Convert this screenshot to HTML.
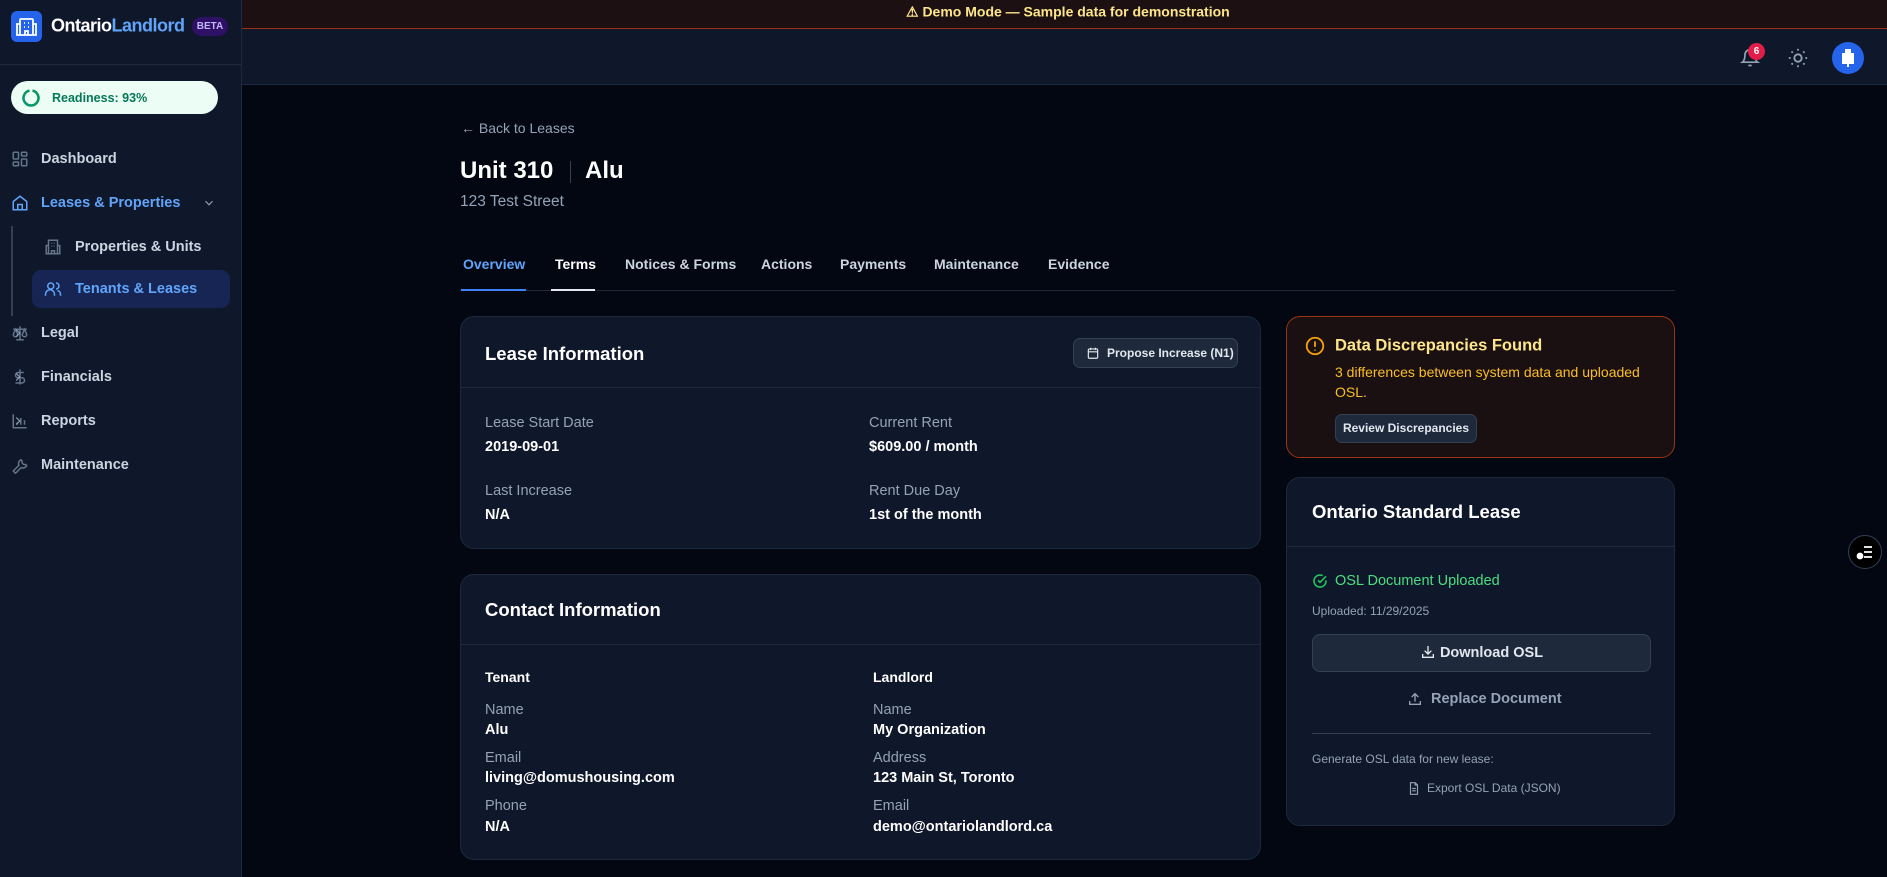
<!DOCTYPE html>
<html><head><meta charset="utf-8"><style>
*{box-sizing:border-box;margin:0;padding:0}
body{width:1887px;height:877px;overflow:hidden;background:#030712;font-family:"Liberation Sans",sans-serif;color:#e5e7eb;position:relative}
.a{position:absolute;white-space:nowrap}
.c{transform:translateY(-50%)}
.side{position:absolute;left:0;top:0;width:242px;height:877px;background:#0f172a;border-right:1px solid #1e293b}
.nav{position:absolute;left:0;width:242px;height:36px;display:flex;align-items:center;font-size:14.5px;color:#cbd5e1;font-weight:bold}
.nav svg{position:absolute;left:11px}
.nav span{position:absolute;left:41px}
.chev{position:absolute;left:204px}
.card{position:absolute;background:#0f172a;border:1px solid #1e293b;border-radius:14px}
.lbl{font-size:14.5px;color:#94a3b8}
.val{font-size:14.5px;color:#fff;font-weight:bold}
.ttl{font-size:18.5px;color:#fff;font-weight:bold}
.tab{font-size:14px;color:#cbd5e1;font-weight:bold}
</style></head><body>
<div class="side">
  <div class="a" style="left:11px;top:11px;width:31px;height:31px;background:#2563eb;border-radius:6px">
    <svg width="31" height="31" viewBox="0 0 31 31" fill="none" stroke="#fff" stroke-width="1.8"><rect x="9" y="8" width="13" height="16" rx="1"/><path d="M9 13H6v11h3M22 13h3v11h-3M13 12h1M17 12h1M13 16h1M17 16h1M14 24v-4h3v4"/></svg>
  </div>
  <div class="a c" style="left:51px;top:26px;font-size:18px;font-weight:bold;color:#fff;letter-spacing:-0.5px">Ontario<span style="color:#60a5fa">Landlord</span></div>
  <div class="a" style="left:192px;top:17px;width:36px;height:19px;border-radius:10px;background:#2e1065;color:#c4b5fd;font-size:10px;font-weight:bold;text-align:center;line-height:19px">BETA</div>
  <div class="a" style="left:0;top:64px;width:242px;height:1px;background:#1e293b"></div>
  <div class="a" style="left:11px;top:81px;width:207px;height:33px;border-radius:17px;background:#ecfdf5">
    <svg class="a" style="left:10px;top:7px" width="20" height="20" viewBox="0 0 20 20"><path d="M11.5 2.6A7.5 7.5 0 1 1 8.5 2.6" fill="none" stroke="#059669" stroke-width="2.5"/></svg>
    <div class="a c" style="left:41px;top:16.5px;font-size:12.5px;font-weight:bold;color:#047857">Readiness: 93%</div>
  </div>
  <div class="nav" style="top:141px"><svg width="18" height="18" viewBox="0 0 24 24" fill="none" stroke="#64748b" stroke-width="2"><rect x="3" y="3" width="7" height="9" rx="1"/><rect x="14" y="3" width="7" height="5" rx="1"/><rect x="14" y="12" width="7" height="9" rx="1"/><rect x="3" y="16" width="7" height="5" rx="1"/></svg><span>Dashboard</span></div>
  <div class="nav" style="top:185px;color:#60a5fa"><svg width="18" height="18" viewBox="0 0 24 24" fill="none" stroke="#60a5fa" stroke-width="2"><path d="M3 10l9-7 9 7v11H3zM9 21v-7h6v7"/></svg><span>Leases &amp; Properties</span><svg class="chev" style="left:202px" width="14" height="14" viewBox="0 0 24 24" fill="none" stroke="#94a3b8" stroke-width="2"><path d="M6 9l6 6 6-6"/></svg></div>
  <div class="a" style="left:11px;top:226px;width:2px;height:90px;background:#334155"></div>
  <div class="nav" style="top:229px"><svg style="left:44px" width="18" height="18" viewBox="0 0 24 24" fill="none" stroke="#64748b" stroke-width="2"><rect x="6" y="3" width="12" height="18"/><path d="M6 10H3v11h3M18 10h3v11h-3M10 7h1M13 7h1M10 11h1M13 11h1M10 21v-4h4v4"/></svg><span style="left:75px">Properties &amp; Units</span></div>
  <div class="a" style="left:32px;top:270px;width:198px;height:38px;border-radius:9px;background:#172554"></div>
  <div class="nav" style="top:271px;color:#60a5fa"><svg style="left:44px" width="18" height="18" viewBox="0 0 24 24" fill="none" stroke="#60a5fa" stroke-width="2"><circle cx="9" cy="8" r="4"/><path d="M2 21v-2a6 6 0 0112 0v2M16 4a4 4 0 010 8M22 21v-2a5 5 0 00-4-5"/></svg><span style="left:75px">Tenants &amp; Leases</span></div>
  <div class="nav" style="top:315px"><svg width="18" height="18" viewBox="0 0 24 24" fill="none" stroke="#64748b" stroke-width="2"><path d="M12 3v18M7 21h10M3 7h18M6 7l-3 7a3 3 0 006 0zM18 7l-3 7a3 3 0 006 0z"/></svg><span>Legal</span><svg class="chev" width="14" height="14" viewBox="0 0 24 24" fill="none" stroke="#94a3b8" stroke-width="2"><path d="M9 6l6 6-6 6"/></svg></div>
  <div class="nav" style="top:359px"><svg width="18" height="18" viewBox="0 0 24 24" fill="none" stroke="#64748b" stroke-width="2"><path d="M12 2v20M17 6H9.5a3.5 3.5 0 000 7h5a3.5 3.5 0 010 7H6"/></svg><span>Financials</span><svg class="chev" width="14" height="14" viewBox="0 0 24 24" fill="none" stroke="#94a3b8" stroke-width="2"><path d="M9 6l6 6-6 6"/></svg></div>
  <div class="nav" style="top:403px"><svg width="18" height="18" viewBox="0 0 24 24" fill="none" stroke="#64748b" stroke-width="2"><path d="M3 3v18h18M8 17v-3M13 17V8M18 17v-6"/></svg><span>Reports</span><svg class="chev" width="14" height="14" viewBox="0 0 24 24" fill="none" stroke="#94a3b8" stroke-width="2"><path d="M9 6l6 6-6 6"/></svg></div>
  <div class="nav" style="top:447px"><svg width="18" height="18" viewBox="0 0 24 24" fill="none" stroke="#64748b" stroke-width="2"><path d="M14.7 6.3a4 4 0 005 5L21 13a6 6 0 01-7.5 2.5L6 23l-3-3 7.5-7.5A6 6 0 0113 5z"/></svg><span>Maintenance</span></div>
</div>

<div class="a" style="left:242px;top:0;width:1645px;height:29px;background:#1c1013;border-bottom:1px solid #9a3412"></div>
<div class="a c" style="left:906px;top:12px;font-size:14px;font-weight:bold;color:#fde68a">⚠ Demo Mode — Sample data for demonstration</div>
<div class="a" style="left:242px;top:29px;width:1645px;height:56px;background:#0f172a;border-bottom:1px solid #1e293b"></div>
<svg class="a" style="left:1740px;top:47px" width="20" height="22" viewBox="0 0 24 24" fill="none" stroke="#94a3b8" stroke-width="2"><path d="M6 8a6 6 0 0112 0c0 7 3 9 3 9H3s3-2 3-9M10 21h4"/></svg>
<div class="a" style="left:1748px;top:43px;width:17px;height:17px;border-radius:50%;background:#e11d48;color:#fff;font-size:10px;font-weight:bold;text-align:center;line-height:17px">6</div>
<svg class="a" style="left:1787px;top:47px" width="22" height="22" viewBox="0 0 24 24" fill="none" stroke="#94a3b8" stroke-width="2"><circle cx="12" cy="12" r="4"/><path d="M12 2v2M12 20v2M4.9 4.9l1.4 1.4M17.7 17.7l1.4 1.4M2 12h2M20 12h2M4.9 19.1l1.4-1.4M17.7 6.3l1.4-1.4"/></svg>
<div class="a" style="left:1832px;top:42px;width:32px;height:32px;border-radius:50%;background:#2563eb"><svg width="32" height="32" viewBox="0 0 32 32" fill="#fff"><rect x="13" y="7" width="6" height="5"/><rect x="10" y="11" width="12" height="11"/><rect x="15" y="22" width="2" height="3"/></svg></div>

<div class="a c" style="left:461px;top:128px;font-size:14px;color:#94a3b8">← Back to Leases</div>
<div class="a c" style="left:460px;top:171px;font-size:24px;font-weight:bold;color:#fff">Unit 310</div>
<div class="a" style="left:570px;top:161px;width:1px;height:22px;background:#334155"></div>
<div class="a c" style="left:585px;top:171px;font-size:24px;font-weight:bold;color:#fff">Alu</div>
<div class="a c" style="left:460px;top:202px;font-size:15.5px;color:#94a3b8">123 Test Street</div>

<div class="a" style="left:460px;top:290px;width:1215px;height:1px;background:#1e293b"></div>
<div class="a c tab" style="left:463px;top:264px;color:#60a5fa">Overview</div>
<div class="a" style="left:461px;top:289px;width:65px;height:2px;background:#3b82f6"></div>
<div class="a c tab" style="left:555px;top:264px;color:#fff">Terms</div>
<div class="a" style="left:551px;top:289px;width:44px;height:2px;background:#e2e8f0"></div>
<div class="a c tab" style="left:625px;top:264px">Notices &amp; Forms</div>
<div class="a c tab" style="left:761px;top:264px">Actions</div>
<div class="a c tab" style="left:840px;top:264px">Payments</div>
<div class="a c tab" style="left:934px;top:264px">Maintenance</div>
<div class="a c tab" style="left:1048px;top:264px">Evidence</div>

<div class="card" style="left:460px;top:316px;width:801px;height:233px">
  <div class="a c ttl" style="left:24px;top:37px">Lease Information</div>
  <div class="a" style="left:612px;top:21px;width:165px;height:30px;border:1px solid #334155;background:#1e293b;border-radius:7px;font-size:12px;font-weight:bold;color:#e2e8f0;line-height:28px;padding-left:33px">Propose Increase (N1)</div>
  <svg class="a" style="left:625px;top:29px" width="14" height="14" viewBox="0 0 24 24" fill="none" stroke="#e2e8f0" stroke-width="2"><rect x="4" y="5" width="16" height="16" rx="2"/><path d="M4 10h16M8 3v4M16 3v4"/></svg>
  <div class="a" style="left:0;top:70px;width:799px;height:1px;background:#1e293b"></div>
  <div class="a c lbl" style="left:24px;top:106px">Lease Start Date</div>
  <div class="a c val" style="left:24px;top:130px">2019-09-01</div>
  <div class="a c lbl" style="left:408px;top:106px">Current Rent</div>
  <div class="a c val" style="left:408px;top:130px">$609.00 / month</div>
  <div class="a c lbl" style="left:24px;top:174px">Last Increase</div>
  <div class="a c val" style="left:24px;top:198px">N/A</div>
  <div class="a c lbl" style="left:408px;top:174px">Rent Due Day</div>
  <div class="a c val" style="left:408px;top:198px">1st of the month</div>
</div>

<div class="card" style="left:460px;top:574px;width:801px;height:286px">
  <div class="a c ttl" style="left:24px;top:35px">Contact Information</div>
  <div class="a" style="left:0;top:69px;width:799px;height:1px;background:#1e293b"></div>
  <div class="a c val" style="left:24px;top:102px;font-size:14px">Tenant</div>
  <div class="a c lbl" style="left:24px;top:135px">Name</div>
  <div class="a c val" style="left:24px;top:155px">Alu</div>
  <div class="a c lbl" style="left:24px;top:183px">Email</div>
  <div class="a c val" style="left:24px;top:203px">living@domushousing.com</div>
  <div class="a c lbl" style="left:24px;top:231px">Phone</div>
  <div class="a c val" style="left:24px;top:252px">N/A</div>
  <div class="a c val" style="left:412px;top:102px;font-size:14px">Landlord</div>
  <div class="a c lbl" style="left:412px;top:135px">Name</div>
  <div class="a c val" style="left:412px;top:155px">My Organization</div>
  <div class="a c lbl" style="left:412px;top:183px">Address</div>
  <div class="a c val" style="left:412px;top:203px">123 Main St, Toronto</div>
  <div class="a c lbl" style="left:412px;top:231px">Email</div>
  <div class="a c val" style="left:412px;top:252px">demo@ontariolandlord.ca</div>
</div>

<div class="card" style="left:1286px;top:316px;width:389px;height:142px;background:#1a0f11;border-color:#9a3412">
  <svg class="a" style="left:17px;top:18px" width="22" height="22" viewBox="0 0 24 24" fill="none" stroke="#f59e0b" stroke-width="2"><circle cx="12" cy="12" r="9"/><path d="M12 7v6M12 16v1"/></svg>
  <div class="a c" style="left:48px;top:29px;font-size:16.5px;font-weight:bold;color:#fde68a">Data Discrepancies Found</div>
  <div class="a" style="left:48px;top:45px;width:320px;font-size:14px;line-height:20px;color:#fbbf24;white-space:normal">3 differences between system data and uploaded OSL.</div>
  <div class="a" style="left:48px;top:97px;width:142px;height:29px;border:1px solid #334155;background:#1e293b;border-radius:7px;font-size:12px;font-weight:bold;color:#e2e8f0;line-height:27px;text-align:center">Review Discrepancies</div>
</div>

<div class="card" style="left:1286px;top:477px;width:389px;height:349px">
  <div class="a c ttl" style="left:25px;top:34px">Ontario Standard Lease</div>
  <div class="a" style="left:0;top:68px;width:387px;height:1px;background:#1e293b"></div>
  <svg class="a" style="left:25px;top:95px" width="16" height="16" viewBox="0 0 24 24" fill="none" stroke="#22c55e" stroke-width="2.4"><path d="M21 11v1a9 9 0 11-5-8M9 11l3 3 9-9"/></svg>
  <div class="a c" style="left:48px;top:103px;font-size:14.5px;color:#4ade80">OSL Document Uploaded</div>
  <div class="a c" style="left:25px;top:133px;font-size:12px;color:#94a3b8">Uploaded: 11/29/2025</div>
  <div class="a" style="left:25px;top:156px;width:339px;height:38px;border:1px solid #334155;background:#1e293b;border-radius:8px;text-align:center;line-height:36px;font-size:14.5px;font-weight:bold;color:#e2e8f0;padding-left:20px">Download OSL</div>
  <svg class="a" style="left:133px;top:166px" width="16" height="16" viewBox="0 0 24 24" fill="none" stroke="#e2e8f0" stroke-width="2"><path d="M12 3v12M7 10l5 5 5-5M4 15v5h16v-5"/></svg>
  <svg class="a" style="left:120px;top:213px" width="16" height="16" viewBox="0 0 24 24" fill="none" stroke="#94a3b8" stroke-width="2"><path d="M12 16V4M7 9l5-5 5 5M4 15v5h16v-5"/></svg>
  <div class="a c" style="left:144px;top:221px;font-size:14.5px;font-weight:bold;color:#94a3b8">Replace Document</div>
  <div class="a" style="left:25px;top:255px;width:339px;height:1px;background:#334155"></div>
  <div class="a c" style="left:25px;top:281px;font-size:12px;color:#94a3b8">Generate OSL data for new lease:</div>
  <svg class="a" style="left:120px;top:303px" width="14" height="15" viewBox="0 0 24 24" fill="none" stroke="#94a3b8" stroke-width="2"><path d="M14 2H6v20h12V6zM14 2v4h4M9 12h6M9 16h6"/></svg>
  <div class="a c" style="left:140px;top:310px;font-size:12px;color:#94a3b8">Export OSL Data (JSON)</div>
</div>

<div class="a" style="left:1848px;top:535px;width:34px;height:34px;border-radius:50%;background:#000;border:1px solid #334155">
  <svg width="32" height="32" viewBox="0 0 32 32" fill="none" stroke="#fff" stroke-width="1.8"><path d="M15 11h8M15 16h8M15 21h8"/><circle cx="11" cy="20" r="2.5" fill="#fff"/></svg>
</div>
</body></html>
